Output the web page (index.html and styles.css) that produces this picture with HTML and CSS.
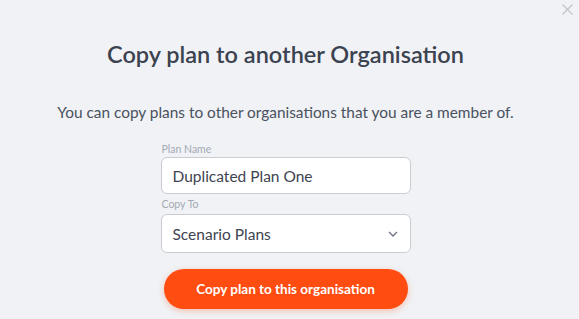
FILE: index.html
```html
<!DOCTYPE html>
<html>
<head>
<meta charset="utf-8">
<link rel="stylesheet" href="styles.css">
</head>
<body>
<div class="modal">
  <button class="close" aria-label="Close">
    <svg width="11" height="11" viewBox="0 0 11 11"><path d="M0.5 0.5L10.5 10.5M10.5 0.5L0.5 10.5" stroke="#c3c7cd" stroke-width="1.4" fill="none"/></svg>
  </button>
  <h1 class="title">Copy plan to another Organisation</h1>
  <p class="lead">You can copy plans to other organisations that you are a member of.</p>
  <form class="form">
    <label class="label">Plan Name</label>
    <div class="input">Duplicated Plan One</div>
    <label class="label">Copy To</label>
    <div class="input select">
      <span>Scenario Plans</span>
      <svg width="10" height="6" viewBox="0 0 10 6"><path d="M1 1L5 5L9 1" stroke="#6b7280" stroke-width="1.3" fill="none"/></svg>
    </div>
    <div class="actions">
      <button type="button" class="primary">Copy plan to this organisation</button>
    </div>
  </form>
</div>
</body>
</html>
```
FILE: styles.css
```css
html, body {
  margin: 0;
  padding: 0;
  background: #f0f2f5;
  width: 579px;
  height: 319px;
  overflow: hidden;
}
.modal {
  font-family: Lato, "Noto Sans", sans-serif;
  display: flex;
  flex-direction: column;
  align-items: center;
  padding-top: 40px;
  padding-right: 8px;
  position: relative;
  height: 319px;
  box-sizing: border-box;
}
.close {
  position: absolute;
  top: 1px;
  right: 4px;
  width: 16px;
  height: 16px;
  border: 0;
  background: none;
  padding: 0;
  display: flex;
  align-items: center;
  justify-content: center;
}
.title {
  margin: 0;
  font-size: 23.5px;
  line-height: 29px;
  font-weight: 600;
  color: #3b4250;
}
.lead {
  margin: 33px 0 0;
  font-size: 15.4px;
  line-height: 20px;
  color: #4a5160;
}
.form {
  width: 250px;
  margin-top: 20px;
  display: flex;
  flex-direction: column;
}
.label {
  font-size: 10.5px;
  line-height: 15px;
  color: #a3aab4;
  padding-left: 1px;
}
.input {
  height: 37px;
  box-sizing: border-box;
  border: 1px solid #c9ccd1;
  border-radius: 6px;
  background: #fff;
  padding: 0 11px;
  font-size: 15.5px;
  color: #3e4451;
  display: flex;
  align-items: center;
  margin-bottom: 3px;
}
.select {
  height: 39px;
  justify-content: space-between;
  margin-top: 2px;
  margin-bottom: 0;
}
.select svg {
  margin-right: 1px;
}
.actions {
  display: flex;
  justify-content: center;
  margin-top: 16px;
}
.primary {
  width: 244px;
  height: 40px;
  border: 0;
  border-radius: 20px;
  background: #ff4d12;
  color: #fff;
  font-family: Lato, "Noto Sans", sans-serif;
  font-weight: 700;
  font-size: 13.5px;
  box-shadow: 0 2px 6px rgba(255, 77, 18, 0.3);
}
```
